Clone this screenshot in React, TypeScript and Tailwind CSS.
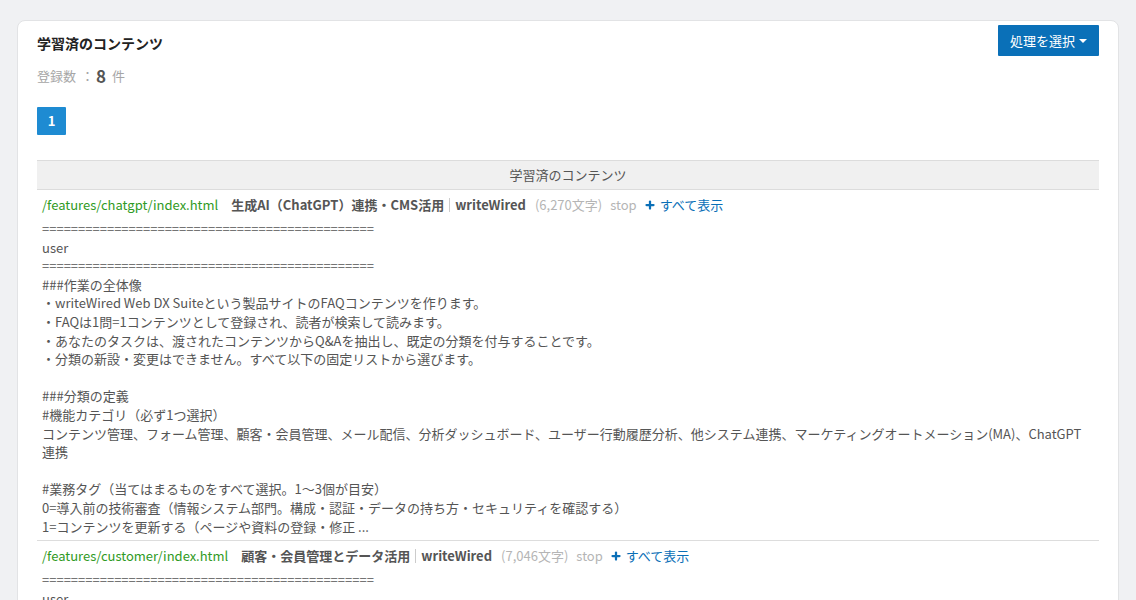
import { Plus } from "lucide-react";

const SEP = "=".repeat(46);

const rows = [
  {
    path: "/features/chatgpt/index.html",
    title: "生成AI（ChatGPT）連携・CMS活用",
    chars: "6,270",
    lines: [
      SEP,
      "user",
      SEP,
      "###作業の全体像",
      "・writeWired Web DX Suiteという製品サイトのFAQコンテンツを作ります。",
      "・FAQは1問=1コンテンツとして登録され、読者が検索して読みます。",
      "・あなたのタスクは、渡されたコンテンツからQ&Aを抽出し、既定の分類を付与することです。",
      "・分類の新設・変更はできません。すべて以下の固定リストから選びます。",
      "",
      "###分類の定義",
      "#機能カテゴリ（必ず1つ選択）",
      "コンテンツ管理、フォーム管理、顧客・会員管理、メール配信、分析ダッシュボード、ユーザー行動履歴分析、他システム連携、マーケティングオートメーション(MA)、ChatGPT連携",
      "",
      "#業務タグ（当てはまるものをすべて選択。1〜3個が目安）",
      "0=導入前の技術審査（情報システム部門。構成・認証・データの持ち方・セキュリティを確認する）",
      "1=コンテンツを更新する（ページや資料の登録・修正 ...",
    ],
  },
  {
    path: "/features/customer/index.html",
    title: "顧客・会員管理とデータ活用",
    chars: "7,046",
    lines: [SEP, "user", SEP, "###作業の全体像"],
  },
];

const Row = ({ row, last }: any) => {
  return (
    <div className={`pl-[5px] pr-[10px] pt-[6px] pb-[4px] ${last ? "" : "border-b border-[#dddddd]"}`}>
      {/* ==row header== */}
      <div className="flex items-center h-[18px] text-[13px] whitespace-nowrap">
        <span className="text-[#2f9a24]">{row.path}</span>
        <span className="ml-[13px] font-bold text-[#555555]">{row.title}</span>
        <span className="mx-[5px] h-[14px] w-px bg-[#cccccc]" />
        <span className="font-bold text-[#555555]">writeWired</span>
        <span className="ml-[9px] text-[#b5b5b5]">({row.chars}文字)</span>
        <span className="ml-[8px] text-[#b5b5b5]">stop</span>
        <span className="ml-[7px] flex items-center gap-[4px] text-[#0a6fb7]">
          <Plus size={12} strokeWidth={4.5} />
          すべて表示
        </span>
      </div>
      <div className="mt-[6px] text-[13px] leading-[18.6px] text-[#555555]">
        {row.lines.map((line: string, i: number) => (
          <div key={i} className="min-h-[18.6px]">
            {line}
          </div>
        ))}
      </div>
    </div>
  );
};

export default function App() {
  return (
    <div
      className="min-h-[600px] bg-[#f0f1f3] px-[17px] pt-5"
      style={{ fontFamily: '"Noto Sans CJK JP", "Noto Sans", sans-serif' }}
    >
      <div className="bg-white border border-[#e2e3e5] rounded-lg px-[19px] pt-[4px] pb-4 h-[620px] overflow-hidden">
        <div className="flex justify-between items-start">
          <h2 className="pt-[8px] text-[14px] font-bold text-[#222222]">
            学習済のコンテンツ
          </h2>
          <button className="h-[31px] px-[12px] bg-[#0a70b8] text-white text-[13px] flex items-center gap-[4px] rounded-[1px]">
            処理を選択
            <span className="w-0 h-0 border-l-[4px] border-r-[4px] border-t-[4px] border-l-transparent border-r-transparent border-t-white" />
          </button>
        </div>

        {/* ==count== */}
        <div className="mt-[10px] flex items-center text-[13px] text-[#a6a6a6] h-[20px]">
          <span>登録数</span>
          <span className="ml-[5px]">：</span>
          <span className="ml-[2px] text-[17px] font-bold text-[#555555]">8</span>
          <span className="ml-[6px]">件</span>
        </div>

        {/* ==pagination== */}
        <div className="mt-[21px]">
          <span className="inline-flex items-center justify-center w-[29px] h-[28px] bg-[#1e8bd2] text-white text-[13px] font-bold rounded-[1px]">
            1
          </span>
        </div>

        {/* ==table== */}
        <div className="mt-[25px]">
          <div className="h-[30px] bg-[#f0f0f0] border-t border-b border-[#dcdcdc] flex items-center justify-center text-[13px] text-[#555555]">
            学習済のコンテンツ
          </div>
          {rows.map((row, i) => (
            <Row key={i} row={row} last={i === rows.length - 1} />
          ))}
        </div>
      </div>
    </div>
  );
}
